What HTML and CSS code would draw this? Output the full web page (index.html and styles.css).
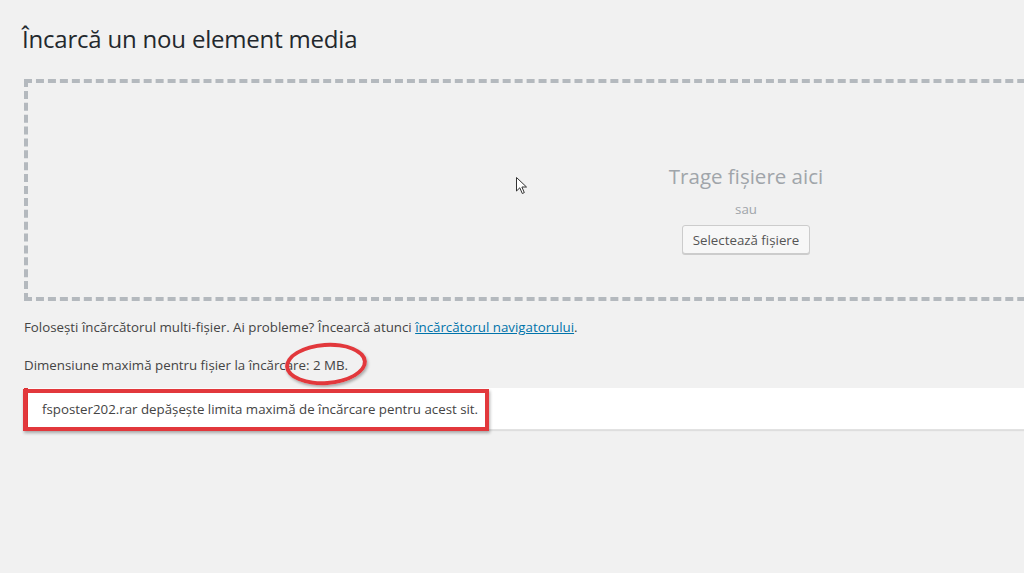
FILE: index.html
```html
<!DOCTYPE html>
<html lang="ro">
<head>
<meta charset="utf-8">
<title>Încarcă un nou element media</title>
<link rel="stylesheet" href="styles.css">
</head>
<body>
<div class="wrap">
  <h1 class="title">Încarcă un nou element media</h1>
  <div class="drop">
    <div class="drop-inner">
      <p class="drop-info">Trage fișiere aici</p>
      <p class="drop-or">sau</p>
      <button class="btn">Selectează fișiere</button>
    </div>
  </div>
  <p class="note">Folosești încărcătorul multi-fișier. Ai probleme? Încearcă atunci <a href="#" class="link">încărcătorul navigatorului</a>.</p>
  <p class="note max">Dimensiune maximă pentru fișier la încărcare: 2 MB.</p>
  <div class="error">
    <span class="error-text">fsposter202.rar depășește limita maximă de încărcare pentru acest sit.</span>
  </div>
</div>
<div class="mark-ellipse"></div>
<div class="mark-rect"></div>
<svg class="cursor" width="12" height="18" viewBox="0 0 12 18"><path d="M0.5 0.5 L0.5 14 L3.8 10.8 L6.3 16.5 L8.3 15.6 L5.9 10 L10.5 10 Z" fill="#fff" stroke="#333" stroke-width="1"/></svg>
</body>
</html>
```
FILE: styles.css
```css
html, body {
  margin: 0;
  padding: 0;
  background: #f1f1f1;
  overflow: hidden;
  width: 1024px;
  height: 573px;
}
body {
  font-family: "Open Sans", "Noto Sans", sans-serif;
  color: #444;
  font-size: 13.3px;
  position: relative;
}
.wrap {
  padding: 0 0 0 24px;
}
.title {
  margin: 0 0 0 -2px;
  padding-top: 22px;
  font-weight: 400;
  font-size: 24px;
  line-height: 34px;
  color: #23282d;
  letter-spacing: -0.2px;
}
.drop {
  box-sizing: border-box;
  margin-top: 23px;
  width: 1444px;
  height: 222px;
  border: 4px dashed #b4b9be;
  display: flex;
  justify-content: center;
  align-items: flex-start;
  padding-top: 79px;
}
.drop-inner {
  text-align: center;
}
.drop-info {
  margin: 0;
  font-size: 20.5px;
  line-height: 28px;
  color: #a0a5aa;
}
.drop-or {
  margin: 10px 0 7px;
  font-size: 13.3px;
  line-height: 18px;
  color: #a0a5aa;
}
.btn {
  font-family: inherit;
  font-size: 13.3px;
  color: #555;
  background: #f7f7f7;
  border: 1px solid #ccc;
  border-radius: 3px;
  box-shadow: 0 1px 0 #ccc;
  height: 29px;
  padding: 0 10px;
}
.note {
  margin: 17px 0 0;
  font-size: 13.3px;
  line-height: 18px;
}
.note.max {
  margin-top: 20px;
}
.link {
  color: #0073aa;
  text-decoration: underline;
}
.error {
  margin-top: 14px;
  width: 1100px;
  height: 41px;
  background: #fff;
  border-left: 4px solid #dc3232;
  box-shadow: 0 1px 1px rgba(0,0,0,0.08);
  border-bottom: 1px solid #e2e2e2;
  display: flex;
  align-items: center;
}
.error-text {
  padding-left: 14px;
}
.mark-ellipse {
  position: absolute;
  left: 285px;
  top: 343px;
  width: 74px;
  height: 34px;
  border: 4px solid #e2383c;
  border-radius: 50%;
  transform: rotate(-4deg);
  box-shadow: 1px 2px 3px rgba(0,0,0,0.3);
}
.mark-rect {
  position: absolute;
  left: 23px;
  top: 389px;
  width: 458px;
  height: 34px;
  border: 4px solid #e2383c;
  box-shadow: 1px 2px 3px rgba(0,0,0,0.3);
}
.cursor {
  position: absolute;
  left: 516px;
  top: 177px;
}
```
